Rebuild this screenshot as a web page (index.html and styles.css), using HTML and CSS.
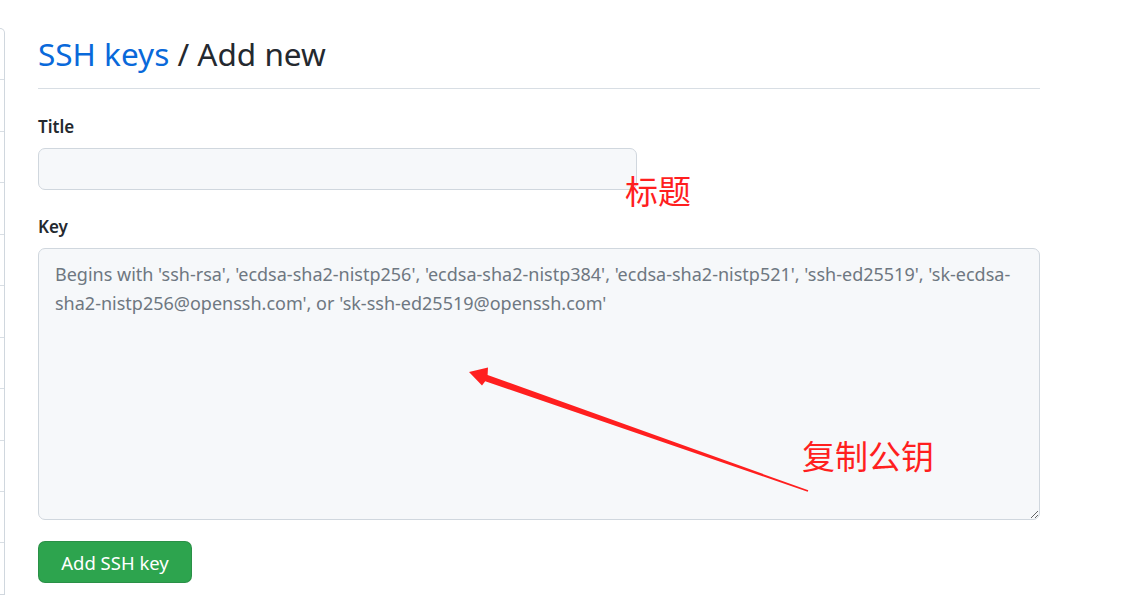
FILE: index.html
```html
<!DOCTYPE html>
<html lang="en">
<head>
<meta charset="utf-8">
<title>SSH keys / Add new</title>
<link rel="stylesheet" href="styles.css">
</head>
<body>
<div class="layout">
  <nav class="sidebar">
    <div class="side-item"></div>
    <div class="side-item"></div>
    <div class="side-item"></div>
    <div class="side-item"></div>
    <div class="side-item"></div>
    <div class="side-item"></div>
    <div class="side-item"></div>
    <div class="side-item"></div>
    <div class="side-item"></div>
    <div class="side-item"></div>
    <div class="side-item"></div>
  </nav>
  <main class="content">
    <div class="subhead">
      <h2 class="subhead-heading"><a class="crumb" href="#">SSH keys</a> / Add new</h2>
    </div>
    <form class="key-form">
      <div class="form-group">
        <label class="form-label" for="title">Title</label>
        <input class="form-control title-input" id="title" type="text">
      </div>
      <div class="form-group">
        <label class="form-label" for="key">Key</label>
        <textarea class="form-control key-input" id="key" placeholder="Begins with 'ssh-rsa', 'ecdsa-sha2-nistp256', 'ecdsa-sha2-nistp384', 'ecdsa-sha2-nistp521', 'ssh-ed25519', 'sk-ecdsa-sha2-nistp256@openssh.com', or 'sk-ssh-ed25519@openssh.com'"></textarea>
      </div>
      <button class="btn-primary" type="button">Add SSH key</button>
    </form>
  </main>
</div>
<span class="note note-title">标题</span>
<span class="note note-key">复制公钥</span>
<svg class="arrow" width="1148" height="600" viewBox="0 0 1148 600" aria-hidden="true">
  <polygon points="469,372 488,367.5 487.6,375 808.3,490.3 807.7,491.7 485.2,381.2 482,385.5" fill="#ff1f1f"/>
</svg>
</body>
</html>
```
FILE: styles.css
```css
html, body {
  margin: 0;
  padding: 0;
  background: #ffffff;
}
body {
  position: relative;
  width: 1148px;
  height: 600px;
  overflow: hidden;
  font-family: "Noto Sans", "Open Sans", "Liberation Sans", sans-serif;
  color: #24292f;
}
.layout {
  display: flex;
  align-items: flex-start;
  gap: 33px;
}
.sidebar {
  flex: 0 0 auto;
  width: 4px;
  margin-top: 28px;
  border: 1px solid #d0d7de;
  border-left: none;
  border-top-right-radius: 7px;
}
.side-item {
  height: 50.45px;
  border-bottom: 1px solid #d8dee4;
}
.side-item:last-child {
  border-bottom: none;
}
.content {
  flex: 0 0 1002px;
  width: 1002px;
}
.subhead {
  padding-top: 30px;
  padding-bottom: 10px;
  border-bottom: 1px solid #d8dee4;
}
.subhead-heading {
  margin: 0;
  font-size: 31.5px;
  font-weight: 400;
  line-height: 48px;
  color: #24292f;
}
.crumb {
  color: #0969da;
  text-decoration: none;
}
.key-form {
  padding-top: 25px;
}
.form-group {
  display: flex;
  flex-direction: column;
  align-items: flex-start;
  margin-bottom: 24px;
}
.form-group:last-of-type {
  margin-bottom: 21px;
}
.form-label {
  font-size: 17px;
  font-weight: 600;
  line-height: 26px;
  margin-bottom: 8px;
  color: #24292f;
}
.form-control {
  box-sizing: border-box;
  font-family: "Noto Sans", "Open Sans", "Liberation Sans", sans-serif;
  font-size: 18px;
  color: #24292f;
  background: #f6f8fa;
  border: 1px solid #d0d7de;
  border-radius: 7px;
  outline: none;
}
.title-input {
  width: 599px;
  height: 42px;
  padding: 0 16px;
}
.key-input {
  width: 1002px;
  height: 272px;
  padding: 11px 16px 9px;
  line-height: 29px;
  resize: vertical;
}
.key-input::placeholder {
  color: #6e7781;
  opacity: 1;
}
.btn-primary {
  display: block;
  box-sizing: border-box;
  width: 154px;
  height: 42px;
  margin-top: 0;
  padding: 0;
  font-family: "Noto Sans", "Open Sans", "Liberation Sans", sans-serif;
  font-size: 18.5px;
  color: #ffffff;
  background: #2da44e;
  border: 1px solid rgba(27, 31, 36, 0.15);
  border-radius: 7px;
}
.note {
  position: absolute;
  font-family: "Noto Sans CJK SC", sans-serif;
  font-size: 33px;
  line-height: 1;
  color: #ff1f1f;
  white-space: nowrap;
}
.note-title {
  left: 625px;
  top: 174px;
}
.note-key {
  left: 802px;
  top: 439px;
}
.arrow {
  position: absolute;
  left: 0;
  top: 0;
  pointer-events: none;
}
```
